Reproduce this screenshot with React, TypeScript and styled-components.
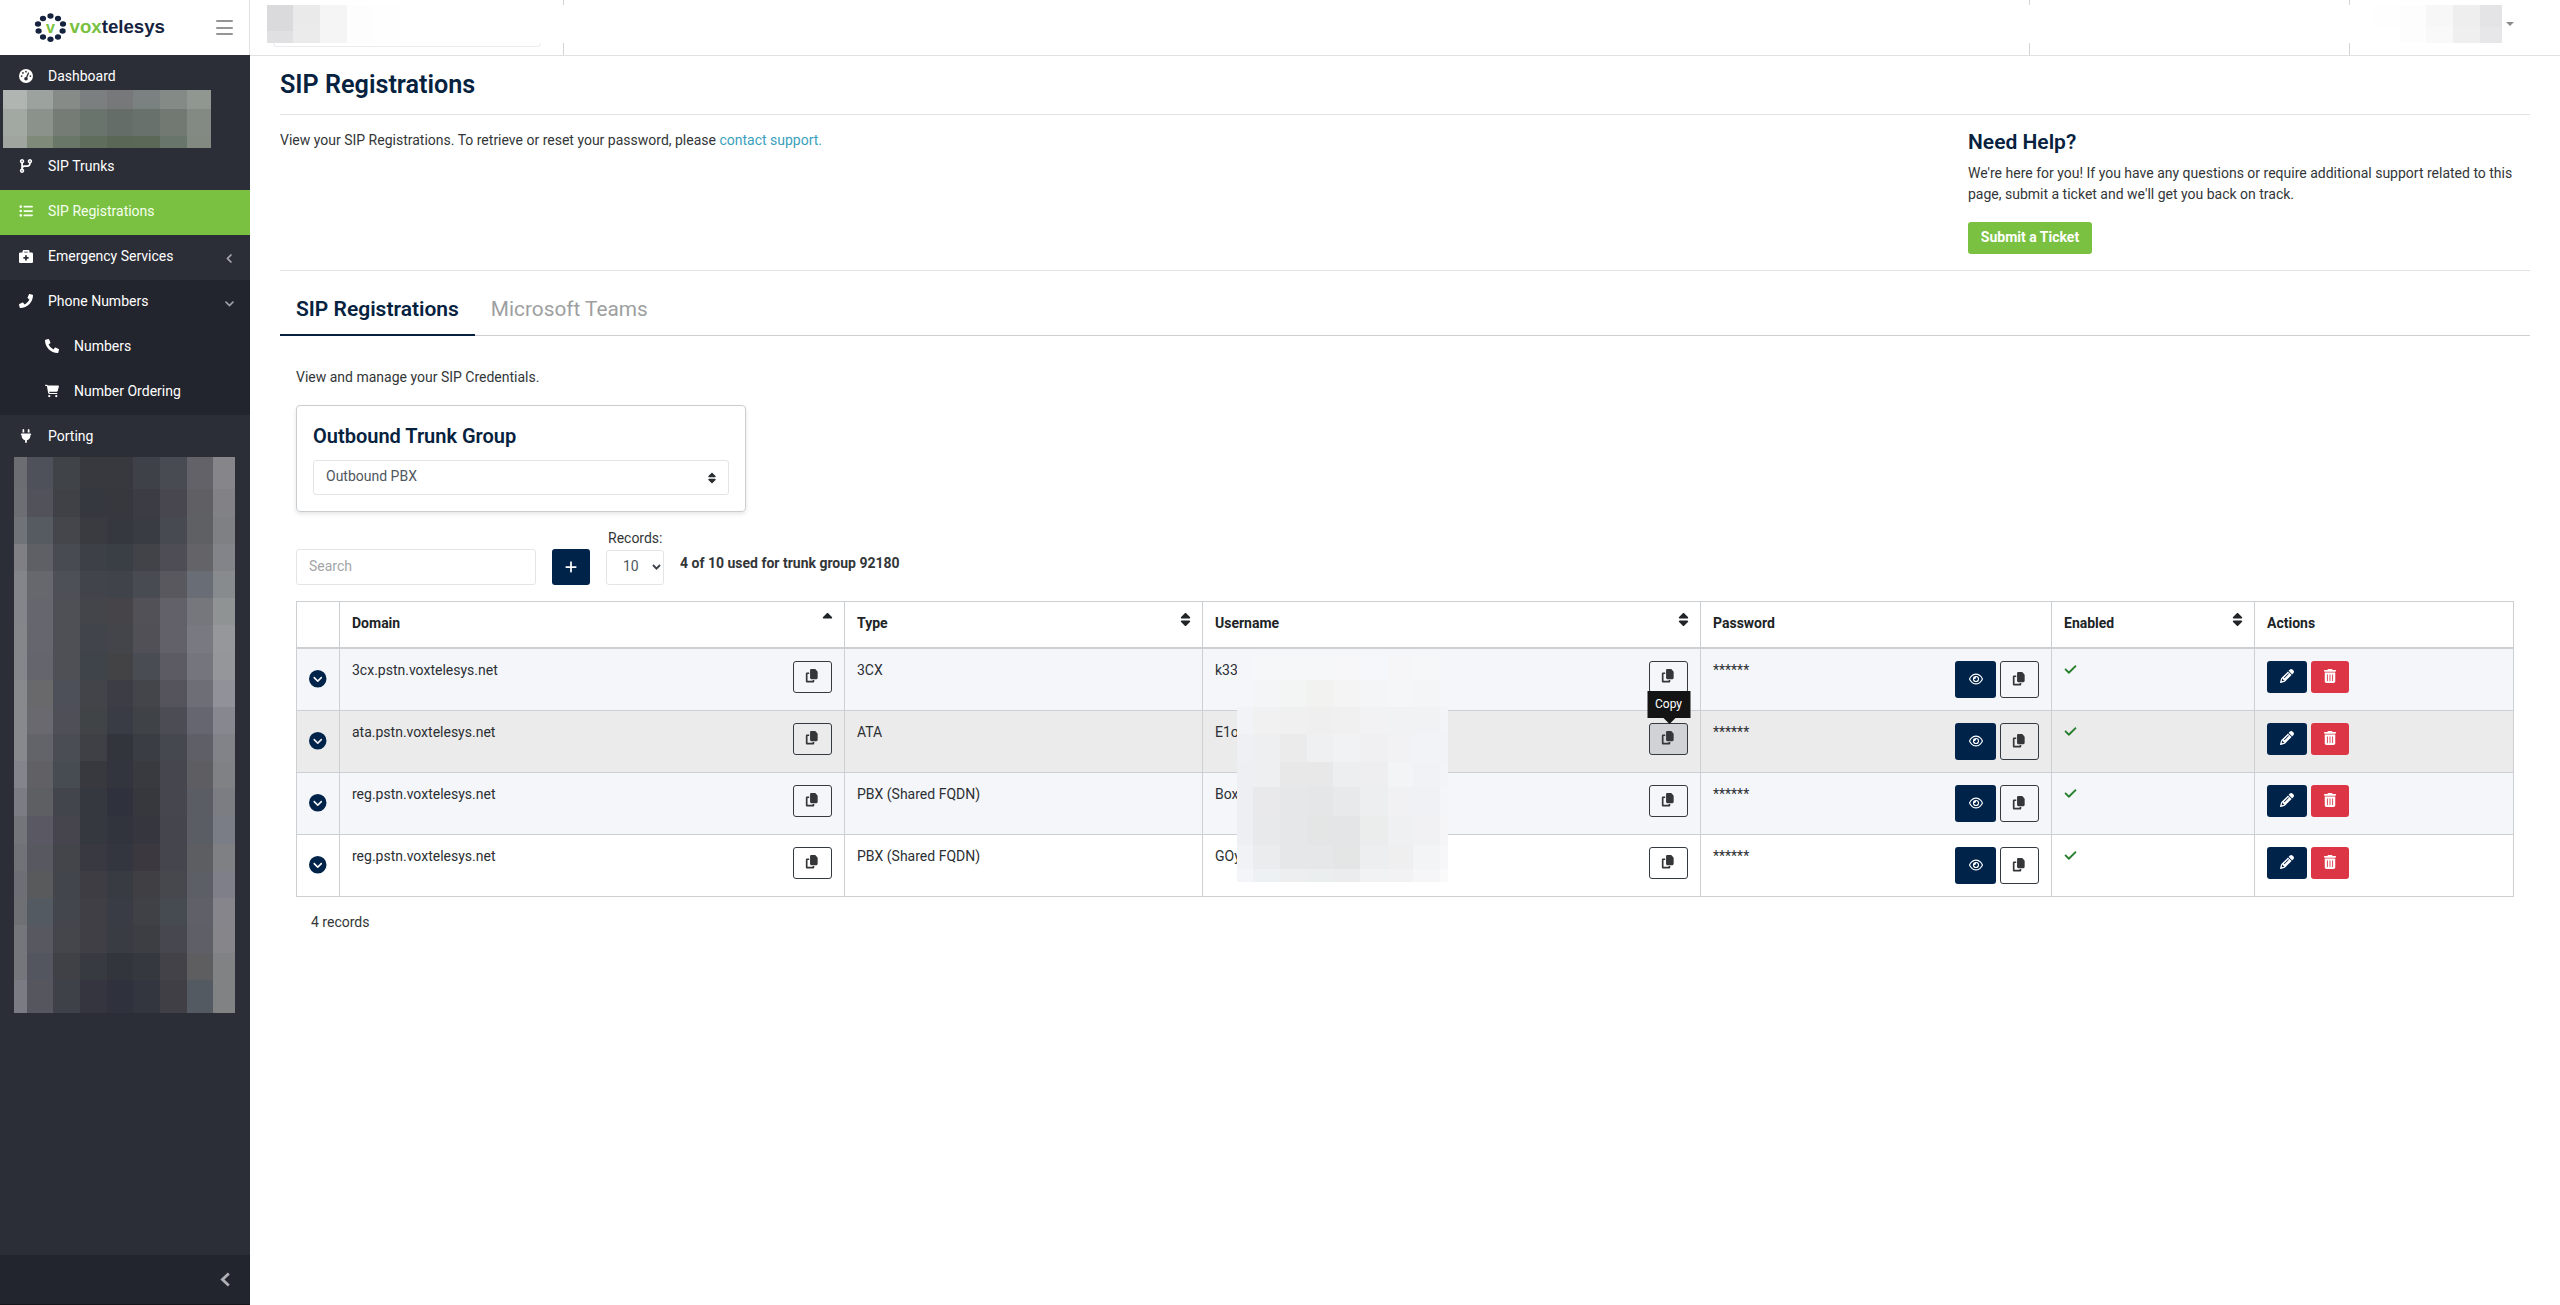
import React from "react";
import styled, { createGlobalStyle, css } from "styled-components";
import {
  FaAngleDown,
  FaAngleLeft,
  FaCartShopping,
  FaCheck,
  FaCircleChevronDown,
  FaCodeBranch,
  FaCopy,
  FaGaugeHigh,
  FaListUl,
  FaPencil,
  FaPlug,
  FaPlus,
  FaRegEye,
  FaSort,
  FaSortUp,
  FaTrashCan,
} from "react-icons/fa6";
import { FaBriefcaseMedical, FaPhone, FaPhoneAlt } from "react-icons/fa";

const color = {
  navy: "#00234a",
  heading: "#06223f",
  green: "#7ac142",
  red: "#dc3545",
  sidebar: "#2b2d37",
  sidebarDark: "#23252e",
  line: "#cdd0d2",
  text: "#333638",
  dark: "#2b2f33",
};

const GlobalStyle = createGlobalStyle`
  *, *::before, *::after { box-sizing: border-box; }
  html, body { margin: 0; background: #fff; }
  body {
    font-family: Roboto, "Liberation Sans", sans-serif;
    font-size: 14px;
    line-height: 21px;
    color: ${color.text};
  }
  h1, h2, p { margin: 0; }
  button, input { font: inherit; }
  svg { display: block; flex: none; }
`;

/* ---------- shell ---------- */

const Shell = styled.div`
  display: grid;
  grid-template-columns: 250px 1fr;
  grid-template-rows: 56px 1fr;
  height: 1305px;
`;

const Brand = styled.div`
  display: flex;
  align-items: center;
  justify-content: space-between;
  height: 55px;
  padding: 0 16px 0 34px;
  border-right: 1px solid #e1e1e3;
`;

const Burger = styled.button`
  display: flex;
  flex-direction: column;
  justify-content: space-between;
  width: 17px;
  height: 15px;
  padding: 0;
  border: 0;
  background: none;
  span {
    height: 2px;
    background: #959597;
    border-radius: 1px;
  }
`;

const TopBar = styled.header`
  display: grid;
  grid-template-columns: 314px 1466px 320px 1fr;
  height: 56px;
  border-bottom: 1px solid #e0e1e3;
`;

const TopCell = styled.div<{ $end?: boolean; $last?: boolean }>`
  display: flex;
  flex-direction: column;
  align-items: ${(p) => (p.$end ? "flex-end" : "flex-start")};
  padding: 5px 17px 0;
  background: ${(p) =>
    p.$last
      ? "none"
      : "linear-gradient(#d4d4d6, #d4d4d6) right 0 top 0 / 1px 5px no-repeat, linear-gradient(#d4d4d6, #d4d4d6) right 0 top 43px / 1px 12px no-repeat"};
`;

const SearchEdge = styled.div`
  width: 268px;
  height: 4px;
  margin-left: 6px;
  border: 1px solid #ebebec;
  border-top: 0;
  border-radius: 0 0 4px 4px;
`;

const UserMenu = styled.div`
  display: flex;
  align-items: center;
  gap: 4px;
  padding-right: 29px;
`;

const Caret = styled.span`
  border: 4px solid transparent;
  border-top-color: #8c8c8e;
  border-bottom: 0;
`;

/* ---------- pixelated privacy masks ---------- */

const Mask = styled.div<{ $cols: string; $rows: string }>`
  display: grid;
  width: max-content;
  grid-template-columns: ${(p) => p.$cols};
  grid-template-rows: ${(p) => p.$rows};
`;

const MaskCell = styled.span<{ $fill: string }>`
  background: ${(p) => p.$fill};
`;

function Mosaic({ cols, rows, fills }: { cols: number[]; rows: number[]; fills: string[] }) {
  const px = (v: number[]) => v.map((n) => `${n}px`).join(" ");
  return (
    <Mask $cols={px(cols)} $rows={px(rows)}>
      {fills
        .join(" ")
        .split(" ")
        .map((f, i) => (
          <MaskCell key={i} $fill={`#${f}`} />
        ))}
    </Mask>
  );
}

/* ---------- sidebar ---------- */

const Sidebar = styled.nav`
  display: flex;
  flex-direction: column;
  margin-top: -1px;
  background: ${color.sidebar};
  color: #fff;
`;

const NavGroup = styled.div`
  background: ${color.sidebarDark};
`;

const NavItem = styled.a<{ $active?: boolean; $nested?: boolean }>`
  display: flex;
  align-items: center;
  height: 45px;
  padding: 0 15px 2px ${(p) => (p.$nested ? 44 : 18)}px;
  background: ${(p) => (p.$active ? color.green : "transparent")};
  color: ${(p) => (p.$active ? "#f6ffef" : "#fff")};
`;

const NavIcon = styled.span`
  display: flex;
  justify-content: center;
  width: 16px;
  margin: 0 14px 2px 0;
  font-size: 14px;
`;

const NavArrow = styled.span`
  margin: 3px 0 0 auto;
  color: #a3a5ab;
  font-size: 11px;
  svg {
    stroke: currentColor;
    stroke-width: 20px;
  }
`;

const HiddenItem = styled.div`
  height: 45px;
`;

const HiddenCover = styled.div`
  position: absolute;
  left: 3px;
  top: 90px;
`;

const HiddenList = styled.div`
  margin: -3px 0 0 14px;
`;

const SidebarFoot = styled.div`
  display: flex;
  align-items: center;
  justify-content: flex-end;
  height: 50px;
  margin-top: auto;
  padding-right: 20px;
  background: ${color.sidebarDark};
  border-bottom: 1px solid #15161b;
`;

const navMaskSmall = [
  "b0b5b1 9ca39e 868b88 7c7f7f 76787a 7b8181 848b87 909791",
  "a2a8a2 8a928b 757c75 68746c 656d68 69716c 727972 828a83",
  "a0a69f 808a78 697769 5f6d5d 5a6757 5b6858 68756a 818980",
];

const navMaskLarge = [
  "6b6d72 4e5159 404347 38393e 37393f 3e4147 484b52 626268 85858a",
  "6c6e73 52525a 3f4147 363840 36383e 3c3d44 48474f 606064 818186",
  "707377 565a61 44464c 393b41 363840 3a3c44 484a51 5f6064 7f8084",
  "808084 5f5f66 484b52 3d4047 3a3e45 424348 4e4d55 646468 83838a",
  "84858a 66686e 4d5057 41444a 40444a 484b52 59585e 696d76 888b8e",
  "84858a 66676e 4f4f56 43454b 464449 525157 62616a 76767d 909394",
  "84868a 66676e 4f5056 41444a 43454b 505056 62616a 797981 96979a",
  "85868b 65666d 4f5055 3f444a 434346 4a4c53 5c5b63 75757d 959699",
  "88898c 69696c 4d5059 43444a 3c3d45 43454b 55545d 6e6e76 91919a",
  "88898c 69696f 4f5057 404446 393c44 3f4247 4c4c55 666670 878790",
  "88898c 63636a 4b4d54 3f4046 33353d 3a3d44 464850 5f5f67 828389",
  "84848c 616165 474b52 38383f 32353d 393940 45464e 5e5e62 808184",
  "7c7c85 5e5f63 42454c 36383f 2f323c 37383e 45464e 5b5d65 7b7d82",
  "74747b 5a5963 46444c 36383f 31343c 36373e 44454d 5a5d64 7b7d86",
  "717277 585861 43454b 393a41 33363e 3c383f 44454d 5d5e62 7e8084",
  "6d6e76 585a5c 43454c 3e3d44 383c42 3f3f44 47484e 5c5f66 7e7f88",
  "6e7074 545a61 44464d 403f46 393c44 3f4147 464b52 5f6068 85858b",
  "75757c 585860 45464c 3f3f45 393c42 3c3e44 47484f 5f5f67 85858a",
  "75767c 54565f 3f4147 383a42 33353d 36383f 444249 5e5e61 818284",
  "7b7b84 55565e 3f4148 34353f 2f313c 33363e 403f46 545a62 818283",
];

/* ---------- page ---------- */

const Page = styled.main`
  display: flex;
  flex-direction: column;
  padding: 0 30px;
`;

const PageTitle = styled.h1`
  height: 59px;
  padding-top: 11px;
  border-bottom: 1px solid #e0e2e4;
  font-size: 25.2px;
  line-height: 36px;
  font-weight: 600;
  color: ${color.heading};
`;

const Intro = styled.section`
  display: grid;
  grid-template-columns: 1fr 562px;
  height: 156px;
  border-bottom: 1px solid #e0e2e4;
`;

const IntroText = styled.p`
  padding-top: 15px;
`;

const Link = styled.a`
  color: #3a9fbd;
`;

const Help = styled.aside`
  padding-top: 15px;
`;

const HelpTitle = styled.h2`
  margin-bottom: 8px;
  font-size: 21px;
  line-height: 25px;
  font-weight: 600;
  color: ${color.heading};
`;

const TicketButton = styled.button`
  display: flex;
  align-items: center;
  justify-content: center;
  width: 124px;
  height: 32px;
  margin-top: 17px;
  padding: 0 0 2px;
  border: 0;
  border-radius: 3px;
  background: ${color.green};
  color: #fff;
  font-weight: 700;
`;

const Tabs = styled.div`
  display: flex;
  height: 65px;
  border-bottom: 1px solid ${color.line};
`;

const Tab = styled.a<{ $active?: boolean }>`
  height: 65px;
  padding: 25px 16px 0;
  border-bottom: ${(p) => (p.$active ? `2px solid ${color.heading}` : "0")};
  font-size: ${(p) => (p.$active ? 21 : 20.8)}px;
  line-height: 26px;
  font-weight: ${(p) => (p.$active ? 600 : 400)};
  color: ${(p) => (p.$active ? color.heading : "#9d9fa1")};
`;

const Pane = styled.section`
  display: flex;
  flex-direction: column;
  align-items: flex-start;
  padding: 31px 16px 0;
`;

const TrunkCard = styled.div`
  width: 450px;
  height: 107px;
  margin-top: 17px;
  padding: 16px;
  border: 1px solid #cbced1;
  border-radius: 4px;
  box-shadow: 0 2px 4px rgba(0, 0, 0, 0.1);
`;

const CardTitle = styled.h2`
  margin-bottom: 10px;
  font-size: 20px;
  line-height: 28px;
  font-weight: 600;
  color: ${color.heading};
`;

const TrunkSelect = styled.div`
  display: flex;
  align-items: center;
  justify-content: space-between;
  height: 35px;
  padding: 0 10px 2px 12px;
  border: 1px solid #e2e4e6;
  border-radius: 3px;
  color: #50575e;
  svg {
    margin-top: 3px;
    font-size: 12px;
    color: ${color.dark};
  }
`;

const Toolbar = styled.div`
  display: flex;
  align-items: flex-end;
  height: 73px;
`;

const SearchInput = styled.input`
  width: 240px;
  height: 36px;
  padding: 0 12px 2px;
  border: 1px solid #e2e4e6;
  border-radius: 3px;
  outline: 0;
  &::placeholder {
    color: #a3a5a8;
    opacity: 1;
  }
`;

const AddButton = styled.button`
  display: grid;
  place-items: center;
  width: 38px;
  height: 36px;
  margin: 0 16px;
  padding: 0;
  border: 0;
  border-radius: 3px;
  background: ${color.navy};
  color: #fff;
  font-size: 14px;
`;

const Records = styled.label`
  display: flex;
  flex-direction: column;
  gap: 1px;
  padding-left: 2px;
`;

const RecordsSelect = styled.div`
  display: flex;
  align-items: center;
  justify-content: space-between;
  width: 58px;
  height: 35px;
  margin-left: -2px;
  padding: 0 2px 2px 16px;
  border: 1px solid #e2e4e6;
  border-radius: 3px;
  color: #50575e;
`;

const Usage = styled.strong`
  margin: 0 0 11px 16px;
  font-weight: 700;
`;

/* ---------- table ---------- */

const TableWrap = styled.div`
  position: relative;
  align-self: stretch;
`;

const Table = styled.div`
  margin-top: 16px;
  border: 1px solid ${color.line};
  border-width: 1px 0 0 1px;
  color: ${color.dark};
`;

const columns = css`
  display: grid;
  grid-template-columns: 43px 505px 358px 498px 351px 203px 259px;
`;

const HeadRow = styled.div`
  ${columns}
  height: 47px;
`;

const HeadCell = styled.div`
  display: flex;
  justify-content: space-between;
  padding: 11px 12px 0;
  border-right: 1px solid ${color.line};
  border-bottom: 2px solid ${color.line};
  font-weight: 700;
  color: #202427;
  svg {
    margin: -1px -3px 0 0;
    font-size: 15px;
  }
`;

const Row = styled.div<{ $tone: string }>`
  ${columns}
  height: 62px;
  background: ${(p) => p.$tone};
`;

const Cell = styled.div<{ $gap?: number }>`
  display: flex;
  align-items: flex-start;
  gap: ${(p) => p.$gap ?? 0}px;
  padding: 12px;
  border-right: 1px solid ${color.line};
  border-bottom: 1px solid ${color.line};
`;

const ExpandCell = styled(Cell)`
  justify-content: center;
  padding: 21px 0 0;
  font-size: 17.5px;
  color: ${color.navy};
`;

const Value = styled.span`
  margin-right: auto;
  line-height: 19px;
`;

const Secret = styled(Value)`
  line-height: 18px;
`;

const Enabled = styled.span`
  padding-top: 2px;
  font-size: 13px;
  color: #1f7a26;
  svg {
    stroke: currentColor;
    stroke-width: 14px;
  }
`;

const IconButton = styled.button<{ $kind?: "navy" | "red"; $w?: number; $tall?: boolean; $hover?: boolean }>`
  display: grid;
  place-items: center;
  position: relative;
  width: ${(p) => p.$w ?? 39}px;
  height: ${(p) => (p.$tall ? 37 : 32)}px;
  padding: 0 ${(p) => (p.$kind ? 0 : 1)}px ${(p) => (p.$tall ? 1 : 2)}px 0;
  border: ${(p) => (p.$kind ? "0" : "1px solid #343a40")};
  border-radius: 3px;
  background: ${(p) =>
    p.$kind === "navy" ? color.navy : p.$kind === "red" ? color.red : p.$hover ? "#d0d2d5" : "transparent"};
  color: ${(p) => (p.$kind ? "#fff" : "#343638")};
  font-size: ${(p) => (p.$kind ? 14 : 13.5)}px;
`;

const Tooltip = styled.span`
  position: absolute;
  z-index: 2;
  left: 50%;
  bottom: 36px;
  width: 43px;
  height: 27px;
  transform: translateX(-50%);
  background: #141414;
  color: #fff;
  font-size: 12px;
  line-height: 26px;
  text-align: center;
  &::after {
    content: "";
    position: absolute;
    left: 16px;
    top: 27px;
    border: 6px solid transparent;
    border-top-color: #141414;
    border-bottom: 0;
  }
`;

const UsernameCover = styled.div`
  position: absolute;
  z-index: 1;
  left: 941px;
  top: 70px;
`;

const Total = styled.p`
  padding: 15px 0 0 15px;
`;

const usernameMask = [
  "f5f6fa f6f7f9 f6f7f9 f6f7f9 f7f7f9 f6f7fa f6f6f9 f6f7f9 f5f6fa",
  "f5f6f9 f4f5f6 f3f4f4 f2f2f1 f3f4f3 f4f5f6 f5f6f8 f4f5f6 f5f6f9",
  "f1f3f6 f1f1f2 f0f0f1 efeff0 f0f0f1 f2f1f3 f1f2f4 f1f2f4 f2f4f7",
  "eff0f4 eeeff1 ebebec eff0f1 f1f2f4 f0f0f2 f2f2f5 f2f3f6 f2f3f7",
  "eeeff3 eeeff0 e8e8e9 e8e8e9 edeeef eeeef0 f3f4f6 f1f2f6 f3f4f8",
  "eeeff2 e9e9eb e6e7e8 e4e6e7 e8e9ea edeeef f1f1f4 f0f1f5 f4f5f8",
  "eeeff2 e8e9ea e6e7e8 e4e6e6 e4e5e6 ebecec eff0f1 f1f0f2 f5f5f8",
  "f0f2f5 ebecee e6e7e8 e6e7e8 e4e6e6 edeeef efefef f3f4f6 f7f7fa",
  "f3f5f8 eef1f3 eceeef ebeeef eaecee f1f2f4 f2f2f4 f6f6f9 fafafb",
];

type Entry = { domain: string; type: string; user: string; tone: string; hover?: boolean };

const entries: Entry[] = [
  { domain: "3cx.pstn.voxtelesys.net", type: "3CX", user: "k33", tone: "#f4f6fa" },
  { domain: "ata.pstn.voxtelesys.net", type: "ATA", user: "E1o", tone: "#ebebeb", hover: true },
  { domain: "reg.pstn.voxtelesys.net", type: "PBX (Shared FQDN)", user: "Box", tone: "#f4f6fa" },
  { domain: "reg.pstn.voxtelesys.net", type: "PBX (Shared FQDN)", user: "GOy", tone: "#ffffff" },
];

/* ---------- logo ---------- */

const LogoSvg = styled.svg`
  text {
    font-family: "Liberation Sans", Arial, sans-serif;
    font-weight: 700;
  }
`;

const dots = [
  [16.5, 4], [24, 6.5], [29, 12], [28.6, 19], [24, 25], [16.5, 27.2], [9, 25], [4.6, 19], [4, 12], [9, 6.5],
];

function Logo() {
  return (
    <LogoSvg width="134" height="32" viewBox="0 0 134 32">
      {dots.map(([cx, cy]) => (
        <ellipse key={`${cx}-${cy}`} cx={cx} cy={cy} rx="3.1" ry="2.7" fill="#16233f" />
      ))}
      <text x="16.5" y="20.5" fontSize="16" textAnchor="middle" fill={color.green}>v</text>
      <text x="35.5" y="20.6" fontSize="18.5" fill={color.green} textLength="95.5" lengthAdjust="spacingAndGlyphs">
        vox<tspan fill="#16233f">telesys</tspan>
      </text>
    </LogoSvg>
  );
}

function SmallChevron() {
  return (
    <svg width="9" height="6" viewBox="0 0 9 6" fill="none" stroke="#3c4248" strokeWidth="1.9">
      <path d="M1 1l3.5 3.6L8 1" />
    </svg>
  );
}

export default function App() {
  return (
    <>
      <GlobalStyle />
      <Shell>
        <Brand>
          <Logo />
          <Burger aria-label="Toggle menu">
            <span />
            <span />
            <span />
          </Burger>
        </Brand>

        <TopBar>
          <TopCell>
            <Mosaic
              cols={[26, 27, 27, 26, 27]}
              rows={[26, 12]}
              fills={["dadadd eaeaeb f5f5f6 fdfdfd fefefe", "e0e0e2 ebebec f5f5f6 fdfdfd fefefe"]}
            />
            <SearchEdge />
          </TopCell>
          <TopCell />
          <TopCell />
          <TopCell $end $last>
            <UserMenu>
              <Mosaic
                cols={[26, 26, 27, 27, 22]}
                rows={[22, 16]}
                fills={["fefefe fdfdfd f7f7f8 eeeeef e4e4e7", "ffffff fdfdfd f9f9fa efeff0 e7e7ea"]}
              />
              <Caret />
            </UserMenu>
          </TopCell>
        </TopBar>

        <Sidebar>
          <NavItem>
            <NavIcon><FaGaugeHigh /></NavIcon>Dashboard
          </NavItem>
          <HiddenItem />
          <HiddenCover>
            <Mosaic cols={[24, 26, 27, 27, 26, 27, 27, 24]} rows={[19, 27, 12]} fills={navMaskSmall} />
          </HiddenCover>
          <NavItem>
            <NavIcon><FaCodeBranch /></NavIcon>SIP Trunks
          </NavItem>
          <NavItem $active>
            <NavIcon><FaListUl /></NavIcon>SIP Registrations
          </NavItem>
          <NavItem>
            <NavIcon><FaBriefcaseMedical /></NavIcon>Emergency Services
            <NavArrow><FaAngleLeft /></NavArrow>
          </NavItem>
          <NavGroup>
            <NavItem>
              <NavIcon><FaPhone /></NavIcon>Phone Numbers
              <NavArrow><FaAngleDown /></NavArrow>
            </NavItem>
            <NavItem $nested>
              <NavIcon><FaPhoneAlt /></NavIcon>Numbers
            </NavItem>
            <NavItem $nested>
              <NavIcon><FaCartShopping /></NavIcon>Number Ordering
            </NavItem>
          </NavGroup>
          <NavItem>
            <NavIcon><FaPlug /></NavIcon>Porting
          </NavItem>
          <HiddenList>
            <Mosaic
              cols={[13, 26, 27, 27, 26, 27, 27, 26, 22]}
              rows={[32, 28, 27, 27, 27, 27, 28, 27, 27, 27, 27, 27, 28, 28, 27, 27, 27, 28, 27, 33]}
              fills={navMaskLarge}
            />
          </HiddenList>
          <SidebarFoot>
            <svg width="10" height="15" viewBox="0 0 10 15" fill="none" stroke="#b0b1b5" strokeWidth="2.8">
              <path d="M8.8 1.4L2.4 7.5l6.4 6.1" />
            </svg>
          </SidebarFoot>
        </Sidebar>

        <Page>
          <PageTitle>SIP Registrations</PageTitle>
          <Intro>
            <IntroText>
              View your SIP Registrations. To retrieve or reset your password, please <Link>contact support.</Link>
            </IntroText>
            <Help>
              <HelpTitle>Need Help?</HelpTitle>
              <p>
                We're here for you! If you have any questions or require additional support related to this page,
                submit a ticket and we'll get you back on track.
              </p>
              <TicketButton>Submit a Ticket</TicketButton>
            </Help>
          </Intro>

          <Tabs>
            <Tab $active>SIP Registrations</Tab>
            <Tab>Microsoft Teams</Tab>
          </Tabs>

          <Pane>
            <p>View and manage your SIP Credentials.</p>
            <TrunkCard>
              <CardTitle>Outbound Trunk Group</CardTitle>
              <TrunkSelect>
                Outbound PBX
                <FaSort />
              </TrunkSelect>
            </TrunkCard>

            <Toolbar>
              <SearchInput placeholder="Search" />
              <AddButton aria-label="Add"><FaPlus /></AddButton>
              <Records>
                Records:
                <RecordsSelect>
                  10
                  <SmallChevron />
                </RecordsSelect>
              </Records>
              <Usage>4 of 10 used for trunk group 92180</Usage>
            </Toolbar>

            <TableWrap>
              <Table>
                <HeadRow>
                  <HeadCell />
                  <HeadCell>Domain<FaSortUp /></HeadCell>
                  <HeadCell>Type<FaSort /></HeadCell>
                  <HeadCell>Username<FaSort /></HeadCell>
                  <HeadCell>Password</HeadCell>
                  <HeadCell>Enabled<FaSort /></HeadCell>
                  <HeadCell>Actions</HeadCell>
                </HeadRow>
                {entries.map((e) => (
                  <Row key={e.user} $tone={e.tone}>
                    <ExpandCell><FaCircleChevronDown /></ExpandCell>
                    <Cell>
                      <Value>{e.domain}</Value>
                      <IconButton aria-label="Copy domain"><FaCopy /></IconButton>
                    </Cell>
                    <Cell><Value>{e.type}</Value></Cell>
                    <Cell>
                      <Value>{e.user}</Value>
                      <IconButton aria-label="Copy username" $hover={e.hover}>
                        <FaCopy />
                        {e.hover && <Tooltip>Copy</Tooltip>}
                      </IconButton>
                    </Cell>
                    <Cell $gap={4}>
                      <Secret>******</Secret>
                      <IconButton aria-label="Show password" $kind="navy" $w={41} $tall><FaRegEye /></IconButton>
                      <IconButton aria-label="Copy password" $tall><FaCopy /></IconButton>
                    </Cell>
                    <Cell>
                      <Enabled><FaCheck /></Enabled>
                    </Cell>
                    <Cell $gap={4}>
                      <IconButton aria-label="Edit" $kind="navy" $w={40}><FaPencil /></IconButton>
                      <IconButton aria-label="Delete" $kind="red" $w={38}><FaTrashCan /></IconButton>
                    </Cell>
                  </Row>
                ))}
              </Table>
              <UsernameCover>
                <Mosaic
                  cols={[16, 27, 27, 26, 27, 28, 25, 27, 8]}
                  rows={[25, 27, 27, 28, 25, 29, 29, 24, 13]}
                  fills={usernameMask}
                />
              </UsernameCover>
            </TableWrap>
            <Total>4 records</Total>
          </Pane>
        </Page>
      </Shell>
    </>
  );
}
